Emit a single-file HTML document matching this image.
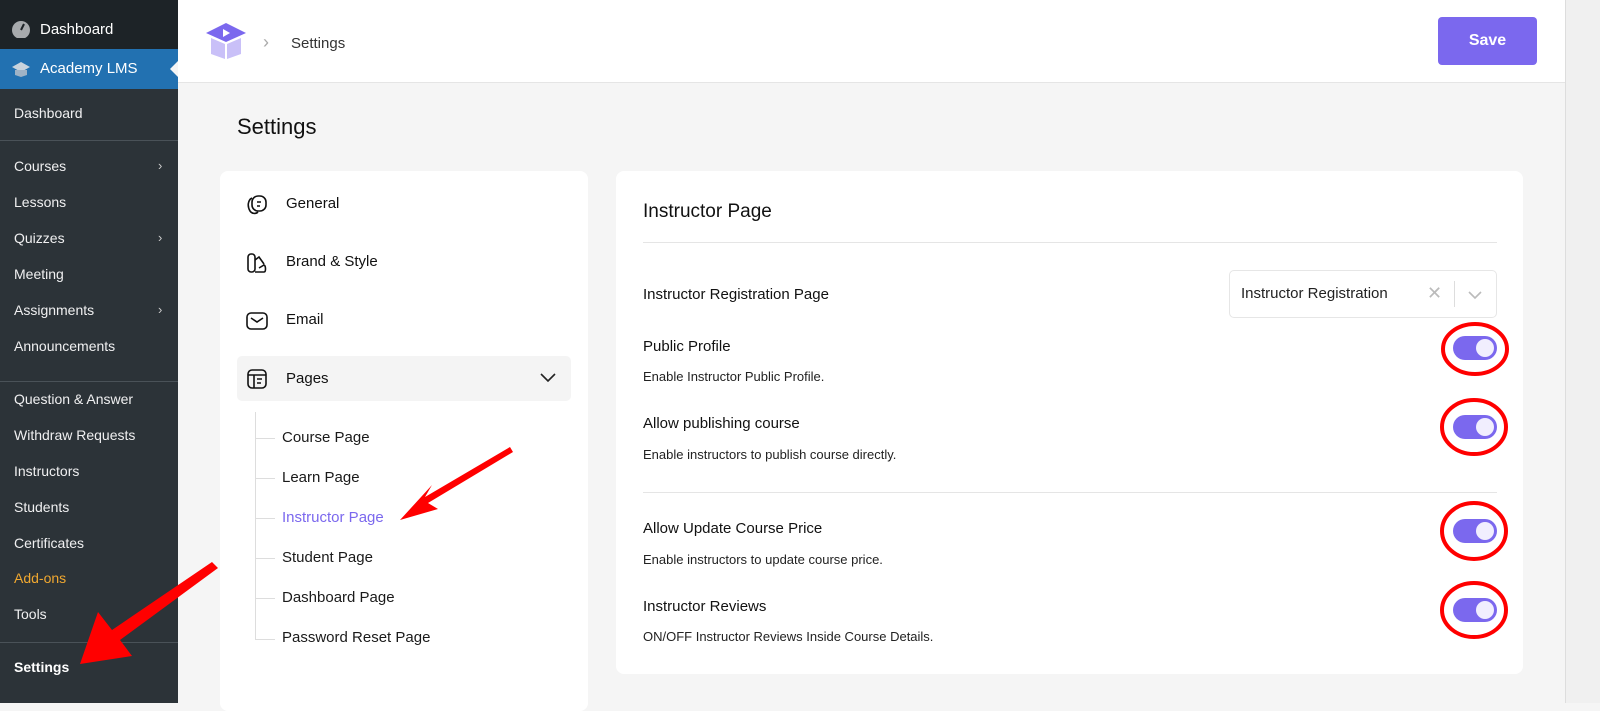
<!DOCTYPE html>
<html><head><meta charset="utf-8"><style>
*{box-sizing:border-box;margin:0;padding:0}
body{width:1600px;height:703px;overflow:hidden;background:#f5f5f5;font-family:"Liberation Sans",sans-serif;position:relative}
.sb{position:absolute;left:0;top:0;width:178px;height:703px;background:#2c3338}
.sb .top{position:absolute;left:0;width:178px;height:40px;color:#fff;font-size:15px;padding-left:40px;line-height:40px}
.si{position:absolute;left:14px;font-size:14px;color:#f0f0f1}
.sep{position:absolute;left:0;width:178px;height:1px;background:#4a5258}
.chev{position:absolute;left:158px;color:#ccc;font-size:13px}
.hdr{position:absolute;left:178px;top:0;width:1387px;height:83px;background:#fff;border-bottom:1px solid #e5e5e5}
.scroll{position:absolute;left:1565px;top:0;width:35px;height:703px;background:#f0f0f0;border-left:1px solid #ddd}
.card{position:absolute;background:#fff;border-radius:8px}
.nav{position:absolute;left:286px;font-size:15px;color:#111}
.sub{position:absolute;left:282px;font-size:15px;color:#1a1a1a}
.lbl{position:absolute;left:643px;font-size:15px;color:#111}
.desc{position:absolute;left:643px;font-size:13px;color:#222}
.tg{position:absolute;left:1453px;width:44px;height:24px;border-radius:12px;background:#7b68ee}
.tg:after{content:"";position:absolute;right:3px;top:3px;width:18px;height:18px;border-radius:50%;background:#f1eefe}
</style></head><body>
<div class="sb">
 <div class="top" style="top:10px;background:#1d2327;top:0;height:49px;line-height:60px">Dashboard</div>
 <div class="top" style="top:49px;background:#2271b1">Academy LMS</div>
 <svg style="position:absolute;left:11px;top:20px" width="20" height="18"><circle cx="10" cy="10" r="9" fill="#a7aaad"/><path d="M10 10 L13 4" stroke="#1d2327" stroke-width="2"/></svg>
 <svg style="position:absolute;left:11px;top:60px" width="20" height="18"><path d="M10 2 L19 7 L10 12 L1 7Z" fill="#c8d3dd"/><path d="M4 10 V15 L10 17 L16 15 V10" fill="#9fb3c6"/></svg>
 <div style="position:absolute;left:170px;top:61px;width:0;height:0;border:8px solid transparent;border-right-color:#f5f5f5;border-left:0"></div>
 <div class="si" style="top:105px">Dashboard</div>
 <div class="sep" style="top:140px"></div>
 <div class="si" style="top:158px">Courses</div><div class="chev" style="top:158px">›</div>
 <div class="si" style="top:194px">Lessons</div>
 <div class="si" style="top:230px">Quizzes</div><div class="chev" style="top:230px">›</div>
 <div class="si" style="top:266px">Meeting</div>
 <div class="si" style="top:302px">Assignments</div><div class="chev" style="top:302px">›</div>
 <div class="si" style="top:338px">Announcements</div>
 <div class="sep" style="top:381px"></div>
 <div class="si" style="top:391px">Question &amp; Answer</div>
 <div class="si" style="top:427px">Withdraw Requests</div>
 <div class="si" style="top:463px">Instructors</div>
 <div class="si" style="top:499px">Students</div>
 <div class="si" style="top:535px">Certificates</div>
 <div class="si" style="top:570px;color:#f0a830">Add-ons</div>
 <div class="si" style="top:606px">Tools</div>
 <div class="sep" style="top:642px"></div>
 <div class="si" style="top:659px;color:#fff;font-weight:bold">Settings</div>
</div>
<div class="hdr">
 <svg style="position:absolute;left:27px;top:22px" width="42" height="38"><path d="M21 1 L41 11 L21 20 L1 11Z" fill="#7b68ee"/><path d="M6 16 V32 L20 37 V22Z" fill="#c9c0f8"/><path d="M36 16 V32 L22 37 V22Z" fill="#c9c0f8"/><path d="M18 7 L25 11 L18 15Z" fill="#fff"/></svg>
 <div style="position:absolute;left:85px;top:32px;color:#aaa;font-size:18px">›</div>
 <div style="position:absolute;left:113px;top:35px;font-size:15px;color:#333">Settings</div>
 <div style="position:absolute;left:1260px;top:17px;width:99px;height:48px;background:#7b68ee;border-radius:4px;color:#fff;font-weight:bold;font-size:16px;text-align:center;line-height:48px">Save</div>
</div>
<div class="scroll"></div>
<div style="position:absolute;left:237px;top:114px;font-size:22px;color:#111">Settings</div>
<div class="card" style="left:220px;top:171px;width:368px;height:540px"></div>
<svg style="position:absolute;left:246px;top:194px" width="22" height="22" fill="none" stroke="#111" stroke-width="1.6"><path d="M6 4 C2 6 1 12 4 17 C6 20 10 20 12 18"/><rect x="6" y="2" width="14" height="15" rx="6"/><path d="M11 8 h4 M11 12 h3"/></svg>
<div class="nav" style="top:195px">General</div>
<svg style="position:absolute;left:246px;top:252px" width="22" height="22" fill="none" stroke="#111" stroke-width="1.6"><rect x="2" y="2" width="7" height="18" rx="3"/><path d="M9 8 L13 5 L18 12 M9 20 H18 C20 20 20 14 18 13 L13 16"/></svg>
<div class="nav" style="top:253px">Brand &amp; Style</div>
<svg style="position:absolute;left:246px;top:310px" width="22" height="22" fill="none" stroke="#111" stroke-width="1.6"><rect x="1" y="3" width="20" height="16" rx="4"/><path d="M5 8 L11 12 L17 8"/></svg>
<div class="nav" style="top:311px">Email</div>
<div style="position:absolute;left:237px;top:356px;width:334px;height:45px;background:#f4f4f4;border-radius:5px"></div>
<svg style="position:absolute;left:246px;top:368px" width="22" height="22" fill="none" stroke="#111" stroke-width="1.6"><rect x="2" y="2" width="18" height="18" rx="4"/><path d="M2 7 H20 M8 7 V20 M11 11 h5 M11 15 h4"/></svg>
<div class="nav" style="top:370px">Pages</div>
<svg style="position:absolute;left:539px;top:372px" width="18" height="12" fill="none" stroke="#222" stroke-width="1.6"><path d="M2 2 L9 9 L16 2"/></svg>
<div style="position:absolute;left:255px;top:412px;width:1px;height:228px;background:#ddd"></div>
<div style="position:absolute;left:255px;top:438px;width:20px;height:1px;background:#ddd"></div>
<div style="position:absolute;left:255px;top:478px;width:20px;height:1px;background:#ddd"></div>
<div style="position:absolute;left:255px;top:518px;width:20px;height:1px;background:#ddd"></div>
<div style="position:absolute;left:255px;top:558px;width:20px;height:1px;background:#ddd"></div>
<div style="position:absolute;left:255px;top:598px;width:20px;height:1px;background:#ddd"></div>
<div style="position:absolute;left:255px;top:639px;width:20px;height:1px;background:#ddd"></div>
<div class="sub" style="top:429px">Course Page</div>
<div class="sub" style="top:469px">Learn Page</div>
<div class="sub" style="top:509px;color:#7b68ee">Instructor Page</div>
<div class="sub" style="top:549px">Student Page</div>
<div class="sub" style="top:589px">Dashboard Page</div>
<div class="sub" style="top:629px">Password Reset Page</div>
<div class="card" style="left:616px;top:171px;width:907px;height:503px"></div>
<div style="position:absolute;left:643px;top:201px;font-size:19px;color:#111">Instructor Page</div>
<div style="position:absolute;left:643px;top:242px;width:854px;height:1px;background:#e5e5e5"></div>
<div class="lbl" style="top:286px">Instructor Registration Page</div>
<div style="position:absolute;left:1229px;top:270px;width:268px;height:48px;border:1px solid #e6e6e6;border-radius:5px"></div>
<div style="position:absolute;left:1241px;top:285px;font-size:15px;color:#222">Instructor Registration</div>
<div style="position:absolute;left:1427px;top:283px;font-size:18px;color:#bbb">✕</div>
<div style="position:absolute;left:1454px;top:281px;width:1px;height:26px;background:#ddd"></div>
<svg style="position:absolute;left:1468px;top:291px" width="14" height="9" fill="none" stroke="#bbb" stroke-width="1.6"><path d="M1 1 L7 7 L13 1"/></svg>
<div class="lbl" style="top:338px">Public Profile</div>
<div class="desc" style="top:369px">Enable Instructor Public Profile.</div>
<div class="lbl" style="top:415px">Allow publishing course</div>
<div class="desc" style="top:447px">Enable instructors to publish course directly.</div>
<div style="position:absolute;left:643px;top:492px;width:854px;height:1px;background:#e5e5e5"></div>
<div class="lbl" style="top:520px">Allow Update Course Price</div>
<div class="desc" style="top:552px">Enable instructors to update course price.</div>
<div class="lbl" style="top:598px">Instructor Reviews</div>
<div class="desc" style="top:629px">ON/OFF Instructor Reviews Inside Course Details.</div>
<div class="tg" style="top:336px"></div>
<div class="tg" style="top:415px"></div>
<div class="tg" style="top:519px"></div>
<div class="tg" style="top:598px"></div>
<svg style="position:absolute;left:0;top:0" width="1600" height="703" fill="none">
<g stroke="#f00" stroke-width="4">
<ellipse cx="1475" cy="349" rx="32" ry="25"/>
<ellipse cx="1474" cy="427" rx="32" ry="27"/>
<ellipse cx="1474" cy="531" rx="32" ry="28"/>
<ellipse cx="1474" cy="610" rx="32" ry="27"/>
</g>
<path d="M510 447 L425 497 L432 485 L400 520 L438 509 L428 503 L513 452Z" fill="#f00"/>
<path d="M212 562 L112 630 L98 612 L80 664 L132 656 L120 640 L218 568Z" fill="#f00"/>
</svg>
</body></html>
